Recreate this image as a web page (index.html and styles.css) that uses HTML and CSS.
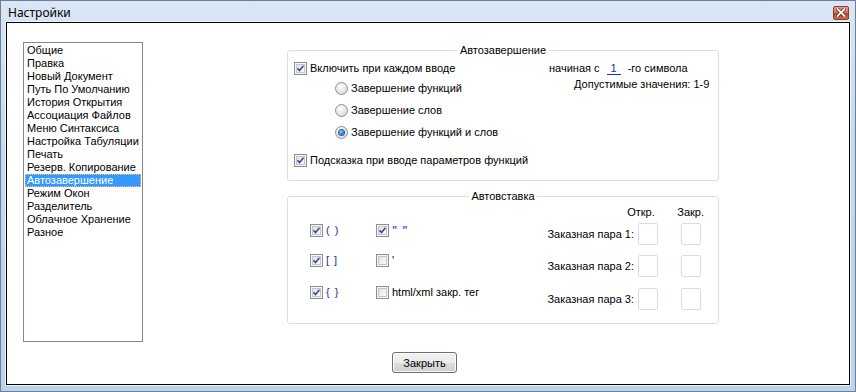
FILE: index.html
```html
<!DOCTYPE html>
<html lang="ru">
<head>
  <meta charset="UTF-8" />
  <title>Настройки</title>
  <link rel="stylesheet" href="styles.css">
</head>
<body>
  <div class="window">
    <!-- Заголовок окна -->
    <div class="titlebar">
      <span class="title">Настройки</span>
      <span class="close">
        <svg width="10" height="9" viewBox="0 0 10 9">
          <path d="M1.5 1 L8.5 8 M8.5 1 L1.5 8" stroke="#5a2418" stroke-width="3.4" stroke-linecap="square"/>
          <path d="M1.5 1 L8.5 8 M8.5 1 L1.5 8" stroke="#fff" stroke-width="1.8" stroke-linecap="square"/>
        </svg>
      </span>
    </div>

    <div class="client">
      <div class="main">
        <ul class="nav">
          <li>Общие</li>
          <li>Правка</li>
          <li>Новый Документ</li>
          <li>Путь По Умолчанию</li>
          <li>История Открытия</li>
          <li>Ассоциация Файлов</li>
          <li>Меню Синтаксиса</li>
          <li>Настройка Табуляции</li>
          <li>Печать</li>
          <li>Резерв. Копирование</li>
          <li class="selected">Автозавершение</li>
          <li>Режим Окон</li>
          <li>Разделитель</li>
          <li>Облачное Хранение</li>
          <li>Разное</li>
        </ul>

        <div class="groups">
          <!-- Автозавершение -->
          <fieldset class="group group-auto">
            <legend>Автозавершение</legend>
            <div class="auto-body">
              <div class="auto-options">
                <label class="opt">
                  <span class="check on"><svg viewBox="0 0 13 13"><path d="M3 6.3 L5.4 8.8 L10 3.2" /></svg></span>
                  Включить при каждом вводе
                </label>
                <div class="radios">
                  <label class="opt"><span class="radio"></span>Завершение функций</label>
                  <label class="opt"><span class="radio"></span>Завершение слов</label>
                  <label class="opt"><span class="radio on"></span>Завершение функций и слов</label>
                </div>
                <label class="opt hint">
                  <span class="check on"><svg viewBox="0 0 13 13"><path d="M3 6.3 L5.4 8.8 L10 3.2" /></svg></span>
                  Подсказка при вводе параметров функций
                </label>
              </div>
              <div class="auto-start">
                <div class="start-line">начиная с <span class="num">1</span> -го символа</div>
                <div class="range">Допустимые значения: 1-9</div>
              </div>
            </div>
          </fieldset>

          <!-- Автовставка -->
          <fieldset class="group group-insert">
            <legend>Автовставка</legend>
            <div class="insert-body">
              <div class="pairs">
                <label class="opt"><span class="check on"><svg viewBox="0 0 13 13"><path d="M3 6.3 L5.4 8.8 L10 3.2" /></svg></span><span class="br">( )</span></label>
                <label class="opt"><span class="check on"><svg viewBox="0 0 13 13"><path d="M3 6.3 L5.4 8.8 L10 3.2" /></svg></span><span class="qt">" "</span></label>
                <label class="opt"><span class="check on"><svg viewBox="0 0 13 13"><path d="M3 6.3 L5.4 8.8 L10 3.2" /></svg></span><span class="br">[ ]</span></label>
                <label class="opt"><span class="check"></span>'</label>
                <label class="opt"><span class="check on"><svg viewBox="0 0 13 13"><path d="M3 6.3 L5.4 8.8 L10 3.2" /></svg></span><span class="br">{ }</span></label>
                <label class="opt"><span class="check"></span>html/xml закр. тег</label>
              </div>
              <div class="custom">
                <span></span>
                <span class="head head-open">Откр.</span>
                <span class="head head-close">Закр.</span>
                <span class="lbl">Заказная пара 1:</span><span class="box"></span><span class="box"></span>
                <span class="lbl">Заказная пара 2:</span><span class="box"></span><span class="box"></span>
                <span class="lbl">Заказная пара 3:</span><span class="box"></span><span class="box"></span>
              </div>
            </div>
          </fieldset>
        </div>
      </div>

      <div class="actions">
        <button class="btn">Закрыть</button>
      </div>
    </div>
  </div>
</body>
</html>
```

FILE: styles.css
```css
* { box-sizing: border-box; }
body { margin: 0; font-family: "Liberation Sans", "DejaVu Sans", sans-serif; font-size: 11px; color: #000; }

/* Окно */
.window {
  width: 856px;
  height: 392px;
  border: 1px solid #6d7f96;
  background: linear-gradient(180deg, #d9e6f5 0%, #c4d7ee 40%, #bcd2ec 100%);
  padding: 0 5px 6px 5px;
  display: flex;
  flex-direction: column;
}
.titlebar {
  height: 21px;
  display: flex;
  align-items: center;
  justify-content: space-between;
  padding: 0 1px 0 2px;
}
.title { font-family: "Noto Sans", "Open Sans", sans-serif; font-size: 12px; position: relative; top: 1px; }
.close {
  width: 16px;
  height: 14px;
  margin-top: 2px;
  border: 1px solid #8b3b2b;
  border-radius: 2px;
  background: linear-gradient(180deg, #e6a291 0%, #d5735c 45%, #c2432b 55%, #cf6a4f 100%);
  display: flex;
  align-items: center;
  justify-content: center;
}
.close svg { display: block; }

.client {
  flex: 1;
  background: #fff;
  border: 1px solid #000;
  box-shadow: 0 0 0 1px #eef4fb;
  padding: 19px 0 0 16px;
  display: flex;
  flex-direction: column;
}
.main { display: flex; }

/* Список разделов */
.nav {
  list-style: none;
  margin: 0;
  padding: 1px 0;
  width: 120px;
  height: 300px;
  border: 1px solid #828790;
}
.nav li {
  line-height: 13px;
  height: 13px;
  padding-left: 2px;
  margin: 0 1px;
  white-space: nowrap;
}
.nav li.selected {
  background: #3399ff;
  color: #fff;
  outline: 1px dotted #f6c27c;
  outline-offset: -1px;
}

/* Группы */
.groups { margin: 2px 0 0 144px; width: 432px; display: flex; flex-direction: column; gap: 9px; }
.group {
  margin: 0;
  padding: 0;
  border: 1px solid #d5dfe5;
  border-radius: 3px;
  min-width: 0;
}
.group legend {
  margin: 0 auto;
  padding: 0 2px;
  line-height: 13px;
}
.opt { display: flex; align-items: center; height: 13px; line-height: 13px; white-space: nowrap; }

.check {
  width: 13px;
  height: 13px;
  flex: none;
  margin-right: 3px;
  border: 1px solid #8f8f8f;
  background: linear-gradient(135deg, #dadada 0%, #f4f4f4 60%, #ffffff 100%);
  box-shadow: inset 0 0 0 1px #f6f6f6, inset 0 0 0 2px #c3c6ca;
}
.check svg { display: block; width: 11px; height: 11px; }
.check svg path { fill: none; stroke: #3c4f91; stroke-width: 2; }
.radio {
  width: 13px;
  height: 13px;
  flex: none;
  margin-right: 3px;
  border: 1px solid #8f8f8f;
  border-radius: 50%;
  background: radial-gradient(circle at 40% 35%, #ffffff 0%, #e9e9e9 45%, #cfcfcf 100%);
  display: flex;
  align-items: center;
  justify-content: center;
}
.radio.on::after {
  content: "";
  width: 5px;
  height: 5px;
  border-radius: 50%;
  background: radial-gradient(circle at 40% 35%, #7fd0ff 0%, #2a78cf 60%, #1b4f9b 100%);
  box-shadow: 0 0 0 1px #2b5fa8;
}

/* Автозавершение */
.group-auto { height: 137px; }
.auto-body { display: flex; padding: 5px 0 0 6px; }
.auto-options { width: 255px; }
.radios { display: flex; flex-direction: column; gap: 9px; margin: 7px 0 0 41px; }
.hint { margin-top: 15px; }
.start-line { line-height: 13px; height: 13px; }
.num {
  display: inline-block;
  width: 14px;
  margin: 0 4px 0 4px;
  text-align: center;
  color: #0033cc;
  border-bottom: 1px solid #0033cc;
  line-height: 12px;
}
.range { margin: 3px 0 0 25px; line-height: 13px; }

/* Автовставка */
.group-insert { height: 134px; }
.insert-body { display: flex; justify-content: space-between; padding: 0 17px 0 22px; }
.pairs {
  display: grid;
  grid-template-columns: 66px auto;
  grid-template-rows: 30px 32px 13px;
  margin-top: 21px;
}
.br { color: #1d2f8a; letter-spacing: 1px; }
.qt { color: #2a60d6; letter-spacing: 1px; font-weight: bold; }
.custom {
  display: grid;
  grid-template-columns: auto 24px 43px;
  grid-template-rows: 17px 32px 33px 22px;
  align-items: start;
  margin-top: 3px;
}
.head { line-height: 13px; white-space: nowrap; position: relative; }
.head-open { justify-self: center; left: -5px; }
.head-close { justify-self: end; left: 3px; }
.lbl { line-height: 22px; white-space: nowrap; text-align: right; }
.box { justify-self: end; width: 20px; height: 22px; border: 1px solid #d5dfe5; border-radius: 2px; }

/* Кнопка */
.actions { display: flex; justify-content: center; padding: 10px 23px 0 0; }
.btn {
  width: 65px;
  height: 21px;
  font: inherit;
  border: 1px solid #707070;
  border-radius: 3px;
  background: linear-gradient(180deg, #f2f2f2 0%, #ebebeb 50%, #dddddd 50%, #cfcfcf 100%);
  box-shadow: inset 0 0 0 1px #fbfbfb;
  padding: 0;
}
```
